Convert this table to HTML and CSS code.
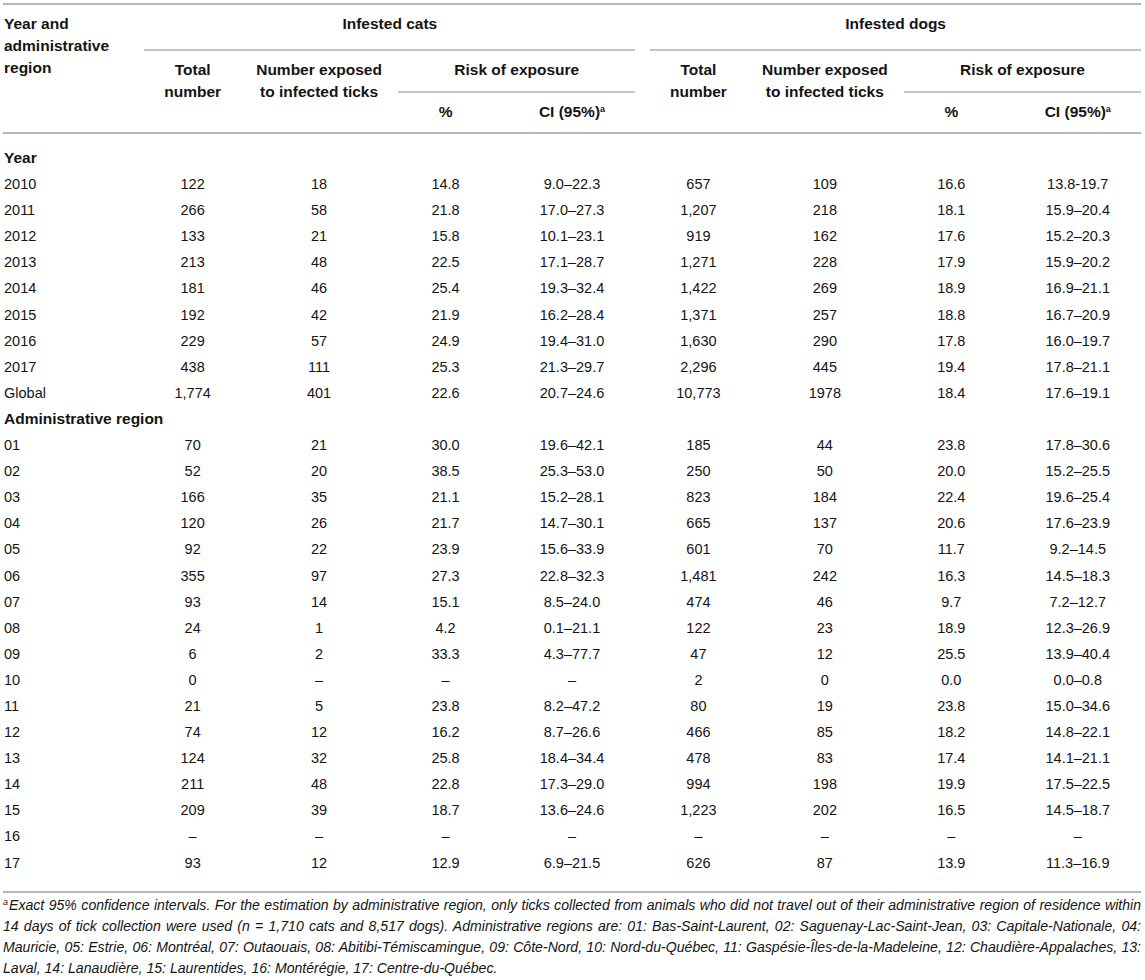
FILE: index.html
```html
<!DOCTYPE html>
<html lang="en">
<head>
<meta charset="utf-8">
<title>Risk of exposure table</title>
<link rel="stylesheet" href="styles.css">
</head>
<body>
<div class="page">
<table class="data">
  <colgroup>
    <col><col><col><col><col><col><col><col><col>
  </colgroup>
  <thead>
    <tr class="h1">
      <th class="label" rowspan="3">Year and<br>administrative<br>region</th>
      <th colspan="4"><div class="grp">Infested cats</div></th>
      <th colspan="4"><div class="grp">Infested dogs</div></th>
    </tr>
    <tr class="h2">
      <th rowspan="2" class="top">Total<br>number</th>
      <th rowspan="2" class="top">Number exposed<br>to infected ticks</th>
      <th colspan="2"><div class="sub">Risk of exposure</div></th>
      <th rowspan="2" class="top">Total<br>number</th>
      <th rowspan="2" class="top">Number exposed<br>to infected ticks</th>
      <th colspan="2"><div class="sub">Risk of exposure</div></th>
    </tr>
    <tr class="h3">
      <th>%</th>
      <th>CI (95%)<sup>a</sup></th>
      <th>%</th>
      <th>CI (95%)<sup>a</sup></th>
    </tr>
  </thead>
  <tbody>
    <tr class="section first"><td colspan="9">Year</td></tr>
    <tr><td>2010</td><td>122</td><td>18</td><td>14.8</td><td>9.0–22.3</td><td>657</td><td>109</td><td>16.6</td><td>13.8-19.7</td></tr>
    <tr><td>2011</td><td>266</td><td>58</td><td>21.8</td><td>17.0–27.3</td><td>1,207</td><td>218</td><td>18.1</td><td>15.9–20.4</td></tr>
    <tr><td>2012</td><td>133</td><td>21</td><td>15.8</td><td>10.1–23.1</td><td>919</td><td>162</td><td>17.6</td><td>15.2–20.3</td></tr>
    <tr><td>2013</td><td>213</td><td>48</td><td>22.5</td><td>17.1–28.7</td><td>1,271</td><td>228</td><td>17.9</td><td>15.9–20.2</td></tr>
    <tr><td>2014</td><td>181</td><td>46</td><td>25.4</td><td>19.3–32.4</td><td>1,422</td><td>269</td><td>18.9</td><td>16.9–21.1</td></tr>
    <tr><td>2015</td><td>192</td><td>42</td><td>21.9</td><td>16.2–28.4</td><td>1,371</td><td>257</td><td>18.8</td><td>16.7–20.9</td></tr>
    <tr><td>2016</td><td>229</td><td>57</td><td>24.9</td><td>19.4–31.0</td><td>1,630</td><td>290</td><td>17.8</td><td>16.0–19.7</td></tr>
    <tr><td>2017</td><td>438</td><td>111</td><td>25.3</td><td>21.3–29.7</td><td>2,296</td><td>445</td><td>19.4</td><td>17.8–21.1</td></tr>
    <tr><td>Global</td><td>1,774</td><td>401</td><td>22.6</td><td>20.7–24.6</td><td>10,773</td><td>1978</td><td>18.4</td><td>17.6–19.1</td></tr>
    <tr class="section"><td colspan="9">Administrative region</td></tr>
    <tr><td>01</td><td>70</td><td>21</td><td>30.0</td><td>19.6–42.1</td><td>185</td><td>44</td><td>23.8</td><td>17.8–30.6</td></tr>
    <tr><td>02</td><td>52</td><td>20</td><td>38.5</td><td>25.3–53.0</td><td>250</td><td>50</td><td>20.0</td><td>15.2–25.5</td></tr>
    <tr><td>03</td><td>166</td><td>35</td><td>21.1</td><td>15.2–28.1</td><td>823</td><td>184</td><td>22.4</td><td>19.6–25.4</td></tr>
    <tr><td>04</td><td>120</td><td>26</td><td>21.7</td><td>14.7–30.1</td><td>665</td><td>137</td><td>20.6</td><td>17.6–23.9</td></tr>
    <tr><td>05</td><td>92</td><td>22</td><td>23.9</td><td>15.6–33.9</td><td>601</td><td>70</td><td>11.7</td><td>9.2–14.5</td></tr>
    <tr><td>06</td><td>355</td><td>97</td><td>27.3</td><td>22.8–32.3</td><td>1,481</td><td>242</td><td>16.3</td><td>14.5–18.3</td></tr>
    <tr><td>07</td><td>93</td><td>14</td><td>15.1</td><td>8.5–24.0</td><td>474</td><td>46</td><td>9.7</td><td>7.2–12.7</td></tr>
    <tr><td>08</td><td>24</td><td>1</td><td>4.2</td><td>0.1–21.1</td><td>122</td><td>23</td><td>18.9</td><td>12.3–26.9</td></tr>
    <tr><td>09</td><td>6</td><td>2</td><td>33.3</td><td>4.3–77.7</td><td>47</td><td>12</td><td>25.5</td><td>13.9–40.4</td></tr>
    <tr><td>10</td><td>0</td><td>–</td><td>–</td><td>–</td><td>2</td><td>0</td><td>0.0</td><td>0.0–0.8</td></tr>
    <tr><td>11</td><td>21</td><td>5</td><td>23.8</td><td>8.2–47.2</td><td>80</td><td>19</td><td>23.8</td><td>15.0–34.6</td></tr>
    <tr><td>12</td><td>74</td><td>12</td><td>16.2</td><td>8.7–26.6</td><td>466</td><td>85</td><td>18.2</td><td>14.8–22.1</td></tr>
    <tr><td>13</td><td>124</td><td>32</td><td>25.8</td><td>18.4–34.4</td><td>478</td><td>83</td><td>17.4</td><td>14.1–21.1</td></tr>
    <tr><td>14</td><td>211</td><td>48</td><td>22.8</td><td>17.3–29.0</td><td>994</td><td>198</td><td>19.9</td><td>17.5–22.5</td></tr>
    <tr><td>15</td><td>209</td><td>39</td><td>18.7</td><td>13.6–24.6</td><td>1,223</td><td>202</td><td>16.5</td><td>14.5–18.7</td></tr>
    <tr><td>16</td><td>–</td><td>–</td><td>–</td><td>–</td><td>–</td><td>–</td><td>–</td><td>–</td></tr>
    <tr class="last"><td>17</td><td>93</td><td>12</td><td>12.9</td><td>6.9–21.5</td><td>626</td><td>87</td><td>13.9</td><td>11.3–16.9</td></tr>
  </tbody>
</table>
<p class="note"><sup>a</sup>Exact 95% confidence intervals. For the estimation by administrative region, only ticks collected from animals who did not travel out of their administrative region of residence within 14 days of tick collection were used (n = 1,710 cats and 8,517 dogs). Administrative regions are: 01: Bas-Saint-Laurent, 02: Saguenay-Lac-Saint-Jean, 03: Capitale-Nationale, 04: Mauricie, 05: Estrie, 06: Montréal, 07: Outaouais, 08: Abitibi-Témiscamingue, 09: Côte-Nord, 10: Nord-du-Québec, 11: Gaspésie-Îles-de-la-Madeleine, 12: Chaudière-Appalaches, 13: Laval, 14: Lanaudière, 15: Laurentides, 16: Montérégie, 17: Centre-du-Québec.</p>
</div>
</body>
</html>
```

FILE: styles.css
```css
html, body {
  margin: 0;
  padding: 0;
  background: #ffffff;
}

body {
  font-family: "Liberation Sans", Arial, Helvetica, sans-serif;
  color: #141414;
}

.page {
  padding: 3px 4px 0 3px;
}

.data {
  width: 1138px;
  table-layout: fixed;
  border-collapse: collapse;
  border-top: 2px solid #b8b8b8;
  border-bottom: 2px solid #b8b8b8;
}

.data col {
  width: 126.44px;
}

.data th {
  font-weight: bold;
  font-size: 15.5px;
  line-height: 22px;
  text-align: center;
  vertical-align: top;
  padding: 0;
}

.data th.label {
  text-align: left;
  padding: 8px 0 0 1px;
}

.h1 th {
  padding-top: 8px;
}

.grp {
  margin-left: 15px;
  padding-bottom: 14px;
  border-bottom: 2px solid #c4c4c4;
}

.h2 th {
  padding-top: 8px;
}

.sub {
  margin-left: 16px;
  padding-bottom: 10px;
  border-bottom: 2px solid #c4c4c4;
}

.h3 th {
  padding-top: 8px;
  padding-bottom: 9px;
}

.data thead {
  border-bottom: 2px solid #b8b8b8;
}

.data sup {
  font-size: 9px;
  line-height: 0;
  vertical-align: 5px;
}

.data td {
  font-size: 14.5px;
  line-height: 26.1px;
  padding: 0;
  text-align: center;
  white-space: nowrap;
}

.data td:first-child {
  text-align: left;
  padding-left: 1px;
}

.section td {
  font-weight: bold;
  font-size: 15.5px;
}

.section.first td {
  padding-top: 11px;
}

.last td {
  padding-bottom: 15px;
}

.note {
  margin: 0;
  padding-top: 2px;
  width: 1138px;
  font-size: 14.1px;
  line-height: 21px;
  font-style: italic;
  text-align: justify;
}

.note sup {
  font-size: 9px;
  line-height: 0;
  vertical-align: 5px;
  margin-right: 1px;
}
```
